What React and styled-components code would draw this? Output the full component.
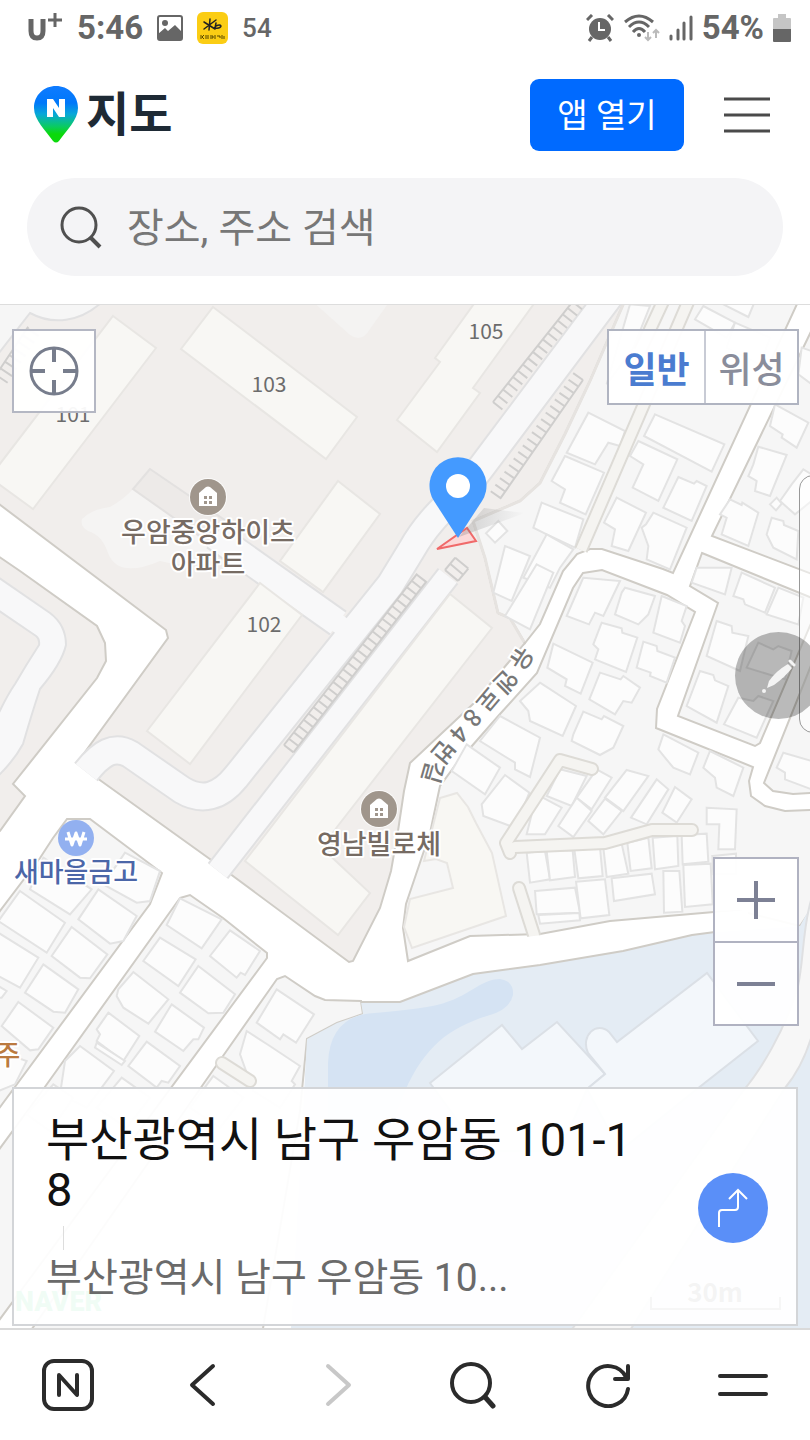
import React from "react";
import styled, { createGlobalStyle } from "styled-components";

const GlobalStyle = createGlobalStyle`
  *, *::before, *::after { box-sizing: border-box; }
  body {
    margin: 0;
    background: #fff;
    font-family: Roboto, "Noto Sans CJK KR", sans-serif;
  }
  button {
    border: 0;
    padding: 0;
    background: none;
    font: inherit;
    color: inherit;
    cursor: pointer;
  }
  svg { display: block; flex: none; }
`;

const Page = styled.div`
  display: flex;
  flex-direction: column;
  min-height: 100vh;
  overflow: hidden;
`;

/* ---------- status bar ---------- */

const StatusBar = styled.div`
  display: flex;
  justify-content: space-between;
  align-items: center;
  height: 56px;
  padding: 0 19px 0 28px;
  color: #666;
`;

const StatusGroup = styled.div`
  display: flex;
  align-items: center;
  gap: ${(p) => p.$gap}px;
`;

const StatusText = styled.span`
  font-size: ${(p) => (p.$small ? 26 : 33)}px;
  font-weight: ${(p) => (p.$small ? 500 : 700)};
  line-height: 40px;
`;

/* ---------- header ---------- */

const Header = styled.header`
  padding: 23px 27px 28px;
  border-bottom: 1px solid #ddd;
`;

const TitleRow = styled.div`
  display: flex;
  align-items: center;
  height: 72px;
  margin-bottom: 27px;
  padding: 0 13px 0 7px;
`;

const Logo = styled.a`
  display: flex;
  align-items: center;
  gap: 8px;
  margin-right: auto;
  color: #1e2a35;
  font-size: 47px;
  font-weight: 700;
  line-height: 64px;
  text-decoration: none;
`;

const OpenAppButton = styled.button`
  width: 154px;
  height: 72px;
  margin-right: 40px;
  padding-bottom: 4px;
  border-radius: 9px;
  background: #006aff;
  color: #fff;
  font-size: 33px;
  font-weight: 400;
`;

const SearchBox = styled.label`
  display: flex;
  align-items: center;
  gap: 24px;
  height: 98px;
  padding: 0 32px;
  border-radius: 49px;
  background: #f4f4f6;
`;

const SearchInput = styled.input`
  flex: 1;
  min-width: 0;
  height: 64px;
  padding: 2px 0 0;
  border: 0;
  outline: 0;
  background: none;
  font: inherit;
  font-size: 40px;
  &::placeholder { color: #777; opacity: 1; }
`;

/* ---------- map ---------- */

const MapArea = styled.main`
  position: relative;
  flex: 1;
  min-height: 720px;
  overflow: hidden;
`;

const MapCanvas = styled.svg`
  position: absolute;
  inset: 0;
  width: 100%;
  height: 100%;
  font-family: "Noto Sans CJK KR", sans-serif;
`;

const LocateButton = styled.button`
  position: absolute;
  top: 24px;
  left: 12px;
  display: grid;
  place-items: center;
  width: 84px;
  height: 84px;
  border: 2px solid #b4b7c3;
  background: rgba(255, 255, 255, 0.95);
`;

const MapTypes = styled.div`
  position: absolute;
  top: 24px;
  right: 11px;
  display: flex;
  height: 76px;
  border: 2px solid #b0b4c1;
  background: rgba(255, 255, 255, 0.95);
`;

const MapType = styled.button`
  width: ${(p) => (p.$active ? 95 : 93)}px;
  color: ${(p) => (p.$active ? "#4a7cd0" : "#8a8d9b")};
  font-size: 36px;
  font-weight: ${(p) => (p.$active ? 700 : 500)};
  & + & { border-left: 2px solid #c8cbd5; }
`;

const ZoomControls = styled.div`
  position: absolute;
  right: 11px;
  bottom: 302px;
  width: 86px;
  border: 2px solid #b0b2c1;
  background: rgba(255, 255, 255, 0.95);
`;

const ZoomButton = styled.button`
  display: grid;
  place-items: center;
  width: 100%;
  height: 82px;
  & + & { height: 83px; border-top: 2px solid #b0b2c1; }
`;

const EdgeHandle = styled.div`
  position: absolute;
  top: 170px;
  right: -20px;
  width: 31px;
  height: 258px;
  border: 1px solid #999;
  border-radius: 14px;
  background: rgba(255, 255, 255, 0.5);
`;

const PenButton = styled.button`
  position: absolute;
  top: 327px;
  right: -12px;
  display: grid;
  place-items: center;
  width: 87px;
  height: 87px;
  border-radius: 50%;
  background: rgba(0, 0, 0, 0.27);
`;

const PlaceCard = styled.section`
  position: absolute;
  left: 12px;
  right: 12px;
  bottom: 2px;
  display: flex;
  align-items: center;
  justify-content: space-between;
  gap: 44px;
  min-height: 238px;
  padding: 20px 28px 18px 32px;
  border: 2px solid #d3d5d8;
  background: rgba(255, 255, 255, 0.94);
`;

const PlaceInfo = styled.div`
  min-width: 0;
  max-width: 600px;
  padding-top: 6px;
`;

const PlaceName = styled.h1`
  margin: 0;
  color: #111;
  font-size: 47px;
  font-weight: 400;
  line-height: 50px;
  word-break: break-all;
`;

const Tick = styled.div`
  width: 1px;
  height: 24px;
  margin: 11px 0 0 17px;
  background: #ddd;
`;

const PlaceAddress = styled.p`
  margin: 0;
  color: #6a6a6a;
  font-size: 39px;
  font-weight: 400;
  line-height: 56px;
`;

const RouteButton = styled.button`
  display: grid;
  flex: none;
  place-items: center;
  width: 70px;
  height: 70px;
  border-radius: 50%;
  background: #5a8ff8;
`;

/* ---------- browser toolbar ---------- */

const Toolbar = styled.nav`
  display: flex;
  height: 112px;
  border-top: 2px solid #dadada;
  background: #fff;
`;

const ToolButton = styled.button`
  display: grid;
  flex: 1;
  place-items: center;
  color: ${(p) => (p.$dim ? "#c8c8c8" : "#2b2b2b")};
`;

/* ---------- map drawing ---------- */

const ROAD_EDGE = "#cfccc6";

const estate = [
  "-5,290 629,290 590,380 565,433 540,482 520,500 473,520 485,557 498,612 510,617 525,642 473,703 410,762 404,790 398,830 391,870 380,907 353,960 349,961 214,861 97,777 77,762 168,637 166,629 -5,500",
  "-5,553 20,570 97,625 105,642 106,660 97,677 13,783 25,795 0,830 -5,832",
];

const townBlock =
  "629,290 803,290 673,572 663,568 602,548 590,548 577,553 563,570 540,623 525,642 510,617 498,612 485,557 473,520 520,500 540,482 565,433 590,380";

const blocks = [
  "820,312 712,535 820,576",
  "702,552 812,597 812,620 760,742 755,745 678,715 718,602 690,585",
  "583,572 602,569 667,594 695,611 657,708 656,727 753,766 749,780 751,795 765,805 785,810 830,808 830,880 800,925 740,910 714,911 610,920 540,933 470,935 408,960 403,927 406,903 430,832 440,785 457,762 500,713 537,672 573,587",
  "812,662 764,782 773,790 793,793 812,792",
  "53,837 67,818 90,818 162,872 150,903 -90,1228 -90,1035 0,910 40,857",
  "180,897 190,894 223,917 267,952 267,957 -20,1345 -145,1345 42,1090",
  "270,988 277,978 285,975 315,995 325,999 361,1000 363,1013 337,1022 307,1038 300,1110 260,1345 20,1345 223,1055",
];

const estateBuildings = [
  "113,315 156,347 33,508 -4,481 -4,468",
  "213,306 357,416 326,458 181,348",
  "476,300 435,357 440,361 397,419 437,451 480,392 473,387 536,300",
  "338,480 380,513 323,591 280,560",
  "260,582 302,614 190,763 147,730",
  "450,593 492,627 337,826 322,847 370,892 338,934 245,860",
];

/* Houses are listed per map tile; tile data has three units to a pixel. */
const houseTiles = [
  { x: 540, y: 300, houses: [
    "145,335 255,390 240,435 205,425 165,490 80,455", "75,465 192,515 137,640 60,605 75,565 35,540",
    "5,605 130,655 105,740 20,700 -20,680", "345,340 553,430 515,512 312,405",
    "295,420 412,475 355,600 278,560 310,490 270,465", "415,528 462,548 470,540 500,555 455,660 370,620",
    "230,590 318,635 265,750 215,735 225,685 192,665", "340,635 440,680 390,805 320,775 325,735 305,680 318,670",
    "530,0 645,0 625,48", "490,15 585,65 560,110 465,55", "585,65 690,110 660,190 560,140",
    "705,310 805,365 770,440 725,410 728,400 690,375", "655,437 740,462 690,585 645,570 650,540 625,525 640,490",
    "790,505 815,520 815,600 765,640 720,600 755,550", "570,595 605,612 607,605 655,635 625,735 545,700 560,650 540,640",
    "695,650 730,660 732,672 775,690 770,775 700,740 680,700", "785,140 815,150 815,250 775,220",
    "690,610 710,590 725,608 708,628", "270,10 330,15 280,140 200,250", "20,700 100,745 60,800 30,860 -50,830",
  ] },
  { x: 540, y: 570, houses: [
    "130,20 240,30 190,135 165,125 147,160 80,135", "245,65 255,50 345,75 325,130 295,160 225,130",
    "365,75 440,105 425,150 435,165 420,215 340,185", "185,155 245,172 247,185 292,200 258,303 165,265 175,235 160,220",
    "40,218 158,275 122,368 75,345 80,325 22,290", "310,212 350,225 352,240 405,260 380,335 330,315 332,305 290,290",
    "180,305 242,325 250,315 300,350 275,395 250,390 225,430 148,385", "0,335 108,405 68,495 -30,450 -35,420 -60,390",
    "130,422 185,445 192,435 250,465 220,530 180,552 95,510 100,490", "470,-10 575,-10 555,70 455,35",
    "605,5 705,50 675,125 615,100 610,85 580,75", "715,50 790,80 775,160 680,130",
    "530,150 575,165 577,185 625,195 600,300 500,255", "480,300 520,312 525,328 565,345 530,455 440,405",
    "595,380 640,390 655,375 700,390 650,500 552,460", "655,215 700,235 715,225 755,240 735,325 620,290",
    "370,490 475,545 450,610 400,590 375,560 355,535", "510,540 610,590 580,675 530,650 525,620 490,590",
    "730,545 815,570 815,655 735,625 735,605 710,590", "60,595 140,615 95,705 20,675", "170,595 215,620 155,715 110,680",
    "260,597 325,615 250,720 195,680", "350,625 385,655 320,760 273,740", "405,648 455,685 410,755 367,725",
    "110,680 155,720 100,798 55,765", "195,683 245,720 190,790 145,750", "-10,670 65,710 15,790 -40,790",
    "500,710 590,715 585,835 535,835 538,760 500,760",
  ] },
  { x: 540, y: 820, houses: [
    "-40,95 15,90 30,175 -30,185", "20,90 98,88 105,168 30,178", "103,85 180,80 188,165 115,172",
    "190,80 245,68 265,158 200,168", "262,65 325,50 335,142 272,150", "338,50 412,45 415,135 345,145",
    "425,42 500,38 505,122 428,130", "215,172 335,158 345,220 222,240", "370,150 418,150 427,272 372,275",
    "430,132 512,128 518,250 435,258", "-15,210 105,200 120,275 -10,280", "-5,282 118,276 120,298 0,308",
    "108,182 195,175 208,282 122,292", "517,105 588,98 588,160 520,160",
  ] },
  { x: 270, y: 570, houses: [
    "690,435 810,500 780,618 735,595 735,575 630,510", "590,520 690,590 645,670 545,600",
    "705,612 778,665 735,770 640,735 635,700",
  ] },
  { x: 270, y: 300, houses: [
    "685,660 712,690 675,725 648,697", "705,735 780,765 725,900 670,875", "800,790 850,815 780,985 705,945",
  ] },
  { x: 0, y: 820, houses: [
    "375,95 480,150 450,240 410,245 310,190", "60,210 195,305 140,395 -5,300", "130,110 275,205 210,280 90,205",
    "295,205 410,285 370,360 330,368 235,295", "-5,335 115,410 60,500 -5,465", "215,318 322,400 270,472 240,470 155,405",
    "130,430 235,505 195,575 160,572 75,515", "-5,495 20,510 5,530 -5,530", "55,543 160,620 115,685 90,688 5,615",
    "540,232 665,295 605,382 500,312", "690,328 780,390 735,462 722,455 710,470 630,405", "480,350 587,415 535,495 430,420",
    "400,453 505,535 445,608 370,560 350,525 355,505", "595,435 705,520 670,575 625,577 540,515",
    "325,575 418,645 370,720 290,660 300,640 290,625", "515,550 612,620 595,655 580,655 550,690 465,632",
    "240,675 342,750 260,860 180,820 195,720", "440,662 540,735 505,785 485,780 470,800 385,735",
    "-5,690 80,720 45,790 -5,810", "365,770 450,830 380,920 290,860", "640,765 730,830 660,920 570,860",
    "290,665 375,720 365,732 285,680", "160,790 220,830 150,930 80,880",
  ] },
  { x: 270, y: 820, houses: [
    "20,505 132,580 78,665 40,640 30,655 -40,605", "-70,630 -5,672 90,735 65,780 75,790 30,860 -50,810 -90,700",
  ] },
];

function Ladder({ x1, y1, x2, y2, depth, closed }) {
  const length = Math.round(Math.hypot(x2 - x1, y2 - y1));
  const angle = (Math.atan2(y2 - y1, x2 - x1) * 180) / Math.PI;
  let d = `M0 0H${length}`;
  if (closed) d += `M0 ${depth}H${length}`;
  for (let i = 0; i <= length; i += 8) d += `M${i} 0V${depth}`;
  return (
    <path d={d} transform={`translate(${x1} ${y1}) rotate(${angle})`} fill="none" stroke="#cfcecd" strokeWidth="2" />
  );
}

function CasedRoad({ d, width, cap = "butt", fill = "#f8f8f9", edge = "#e1e1e2" }) {
  return (
    <g fill="none" strokeLinecap={cap} strokeLinejoin="round">
      <path d={d} stroke={edge} strokeWidth={width} />
      <path d={d} stroke={fill} strokeWidth={width - 4} />
    </g>
  );
}

function Lane({ d, cap = "round" }) {
  return <CasedRoad d={d} width={14} cap={cap} fill="#f5f4f1" edge="#dddbd6" />;
}

function HomeMarker({ x, y }) {
  return (
    <g transform={`translate(${x} ${y})`}>
      <circle r="19" fill="#fff" opacity=".8" />
      <circle r="18" fill="#a0968c" />
      <path d="M-9 9V-4L-2-10q2-1 4 0L9-4V9z" fill="#fff" />
      <path d="M-4-1h3v3h-3zM1-1h3v3H1zM-4 4h3v3h-3zM1 4h3v3H1z" fill="#a0968c" />
    </g>
  );
}

function Label({ x, y, color = "#766b63", children }) {
  return (
    <text x={x} y={y} textAnchor="middle" fontSize="27" fontWeight="500" fill={color}
      stroke="#fff" strokeWidth="4" strokeLinejoin="round" paintOrder="stroke">
      {children}
    </text>
  );
}

function BuildingNumber({ x, y, children }) {
  return <text x={x} y={y} textAnchor="middle" fontSize="21" fill="#6c6c6c">{children}</text>;
}

function MapDrawing() {
  return (
    <MapCanvas viewBox="0 304 810 1024" preserveAspectRatio="xMidYMin slice" role="img" aria-label="우암동 지도">
      <defs>
        <linearGradient id="pinShadow" x1="0" y1="0" x2="1" y2="0">
          <stop offset="0" stopColor="#777" stopOpacity=".6" />
          <stop offset="1" stopColor="#777" stopOpacity="0" />
        </linearGradient>
        <path id="roadName" d="M521 643L503 671L482 692L449 731L432 751Q421 768 418 812" />
      </defs>
      <rect x="-10" y="290" width="830" height="1060" fill="#fff" />

      <g fill="#f1eeec" stroke={ROAD_EDGE} strokeWidth="2">
        {estate.map((p) => <polygon key={p} points={p} />)}
      </g>

      {/* estate grounds */}
      <path d="M-5 300H103C80 322 52 324 30 312L-5 357z" fill="#f6f6f6" stroke="#e1e1e2" strokeWidth="2" />
      <path d="M312 300L350 334Q362 342 370 328L390 300z" fill="#f4f3f2" />
      <path d="M82 518Q92 508 110 506Q124 498 133 488L190 528L214 552Q200 570 160 560Q118 578 108 552Q102 534 88 530Q80 526 82 518z" fill="#f5f4f3" />
      <polygon points="150,468 133,488 215,546 232,524" fill="#edeae8" stroke="#e3e1e0" strokeWidth="2" />
      <CasedRoad d="M215 535L338 622" width={30} />
      <CasedRoad d="M612 292L480 468C460 495 432 512 412 548L390 584L236 776C220 796 202 801 182 789L130 753C114 744 101 752 86 771" width={30} />
      <path d="M330 605L352 621L338 634L322 622z" fill="#f8f8f9" />
      <CasedRoad d="M218 870L448 575" width={26} />
      <path d="M-5 574L50 612Q66 624 66 644Q62 662 40 688Q32 712 23 743Q14 760 -5 778V720Q6 696 15 683Q26 664 39 644Q40 638 36 635L-5 607z" fill="#f8f8f9" stroke="#e1e1e2" strokeWidth="2" />
      <g fill="#f8f7f4" stroke="#e8e6e3" strokeWidth="2">
        {estateBuildings.map((p) => <polygon key={p} points={p} />)}
      </g>
      <Ladder x1={284} y1={744} x2={417} y2={573} depth={12} closed />
      <Ladder x1={493} y1={401} x2={574} y2={299} depth={12} />
      <Ladder x1={583} y1={379} x2={500} y2={498} depth={12} />
      <Ladder x1={445} y1={569} x2={455} y2={557} depth={17} closed />
      <Ladder x1={-4} y1={374} x2={28} y2={326} depth={14} />

      {/* town blocks */}
      <polygon points={townBlock} fill="#f6f6f6" stroke={ROAD_EDGE} strokeWidth="2" />
      <path d="M629 290L590 380L565 433L540 482L520 500L473 520L485 557L498 612L510 617L524 641" fill="none" stroke="#e6e3e0" strokeWidth="3" />
      <g fill="#f6f6f6" stroke={ROAD_EDGE} strokeWidth="2">
        {blocks.map((p) => <polygon key={p} points={p} />)}
      </g>

      {/* water side */}
      <path d="M361 1001L400 1001L473 973L540 964L623 950L692 934L715 931L800 925L830 870V1345H290L307 1038L337 1022L363 1013z" fill="#e4ecf4" />
      <path d="M361 1001L400 1001L473 973L540 964L623 950L692 934L715 931" fill="none" stroke={ROAD_EDGE} strokeWidth="2" />
      <path d="M328 1100V1062Q330 1014 375 1012Q420 1008 437 1004C470 996 480 978 500 978Q514 980 513 994Q510 1008 490 1014C450 1026 425 1045 405 1090L380 1150H328z" fill="#d5e3f3" />
      <path d="M430 1082L502 1024L522 1048L557 1021L605 1073L587 1088L560 1150H480z" fill="#f3f7fb" stroke="#dbe0e6" strokeWidth="2" />
      <path d="M605 1073L588 1052C580 1034 597 1020 609 1031L617 1041L707 972L758 1040L697 1088L620 1150L587 1088z" fill="#f3f7fb" stroke="#dbe0e6" strokeWidth="2" />
      <path d="M830 860C800 900 806 950 798 985C785 1030 760 1070 743 1090L560 1345H620L785 1087Q803 1065 812 1034z" fill="#f7f7f7" stroke="#dfe0e2" strokeWidth="2" />
      <path d="M714 912L748 909V927L714 931z" fill="#fff" />

      {/* houses and lanes */}
      <path d="M440 797L457 792L468 806L476 822L492 852L506 915L412 947L404 926L410 898L453 887L447 862L436 858L424 860z" fill="#f8f7f3" stroke="#e8e6e3" strokeWidth="2" />
      {houseTiles.map((t) => (
        <g key={`${t.x}-${t.y}`} transform={`translate(${t.x} ${t.y}) scale(${1 / 3})`} fill="#fcfcfc" stroke="#e3e3e3" strokeWidth="6">
          {t.houses.map((p) => <polygon key={p} points={p} />)}
        </g>
      ))}
      <Lane d="M692 292L644 403L581 549" cap="butt" />
      <Lane d="M667 292L640 350" cap="butt" />
      <Lane d="M692 829H652L605 842L515 846M592 768L560 759L506 842L510 852" />
      <Lane d="M519 887L534 934" />
      <Lane d="M222 1062L250 1080" />
      <path d="M526 936L542 934V944L526 945z" fill="#fff" />

      {/* selected lot and pin */}
      <polygon points="437,548 467,527 476,540" fill="#fbd9d9" stroke="#f06a6a" strokeWidth="2" />
      <path d="M459 536L484 507L525 512Z" fill="url(#pinShadow)" opacity=".5" />
      <path d="M458 537L434 500A28.5 28.5 0 1 1 482 500z" fill="#449aff" />
      <circle cx="458" cy="485" r="12" fill="#fff" />

      {/* places */}
      <HomeMarker x={208} y={496} />
      <Label x={208} y={541}>
        우암중앙하이츠
        <tspan x={208} dy={32}>아파트</tspan>
      </Label>
      <HomeMarker x={379} y={808} />
      <Label x={379} y={853}>영남빌로체</Label>
      <circle cx="76" cy="837" r="18" fill="#92b0f0" />
      <path d="M68 831L72 844L76 832L80 844L84 831M65 838H87" fill="none" stroke="#fff" strokeWidth="3" strokeLinejoin="round" />
      <Label x={76} y={881} color="#4b66a8">새마을금고</Label>
      <Label x={8} y={1064} color="#bb7a40">주</Label>
      <BuildingNumber x={73} y={421}>101</BuildingNumber>
      <BuildingNumber x={269} y={391}>103</BuildingNumber>
      <BuildingNumber x={486} y={338}>105</BuildingNumber>
      <BuildingNumber x={264} y={631}>102</BuildingNumber>
      <text dx="1 4 4 6 7 6 5" fontSize="24" fontWeight="500" fill="#777" stroke="#fff" strokeWidth="4" paintOrder="stroke">
        <textPath href="#roadName">유엔로84번길</textPath>
      </text>
      <text x="15" y="1310" fontFamily="Roboto, sans-serif" fontSize="27" fontWeight="900" fill="#03c75a">NAVER</text>
      <text x="715" y="1301" textAnchor="middle" fontSize="26" fontWeight="700" fill="#444">30m</text>
      <path d="M651 1296V1308H780V1296" fill="none" stroke="#666" strokeWidth="2" />
    </MapCanvas>
  );
}

/* ---------- icons ---------- */

const CarrierIcon = () => (
  <svg width="35" height="32" viewBox="0 0 35 32" fill="none" stroke="#666" strokeWidth="5">
    <path d="M3 7V19Q3 26 9 26T15 19V7" />
    <path d="M27 1V15M20 8H34" strokeWidth="3" />
  </svg>
);

const PictureIcon = () => (
  <svg width="26" height="26" viewBox="0 0 26 26">
    <rect x="1" y="1" width="24" height="24" rx="2" fill="none" stroke="#666" strokeWidth="2" />
    <circle cx="8" cy="8" r="3" fill="#666" />
    <path d="M1 19L8 13L11 16L18 10L25 17V25H1z" fill="#666" />
  </svg>
);

const BankIcon = () => (
  <svg width="31" height="32" viewBox="0 0 31 32">
    <rect width="31" height="32" rx="6" fill="#fbcd14" />
    <path d="M13 7L12 18M7 10L18 17M7 17L19 8M19 11L18 16Q23 17 24 14Q23 12 19 14" fill="none" stroke="#222" strokeWidth="1.5" strokeLinecap="round" />
    <path d="M4 23V27M7 23L5 25L7 27M9 23V27M11 23V27M13 24H16V26H13M18 23V27M20 24H23V26M25 23V27M27 24V27" fill="none" stroke="#554600" strokeWidth="1" />
  </svg>
);

const AlarmIcon = () => (
  <svg width="28" height="28" viewBox="0 0 28 28" fill="none" stroke="#666" strokeWidth="3">
    <circle cx="14" cy="15" r="11" fill="#666" stroke="none" />
    <path d="M1 6L6 1M27 6L22 1M6 23L3 27M22 23L25 27" />
    <path d="M13 8V16H19" stroke="#fff" strokeWidth="2" />
  </svg>
);

const WifiIcon = () => (
  <svg width="37" height="28" viewBox="0 0 37 28" fill="none" stroke="#666" strokeWidth="3">
    <path d="M2 8Q16-4 30 8M6 13Q16 3 26 13M10 18Q16 11 22 18" />
    <circle cx="16" cy="21" r="2" fill="#666" stroke="none" />
    <path d="M25 18V26M22 23L25 26L28 23M33 24V16M30 19L33 16L36 19" stroke="#bbb" strokeWidth="2" />
  </svg>
);

const SignalIcon = () => (
  <svg width="24" height="26" viewBox="0 0 24 26" stroke="#666" strokeWidth="3" strokeLinecap="round">
    <path d="M2 21V24M9 15V24M15 8V24M22 2V24" />
  </svg>
);

const BatteryIcon = () => (
  <svg width="18" height="28" viewBox="0 0 18 28">
    <path d="M5 0H13V4H17Q18 4 18 5V15H0V5Q0 4 1 4H5z" fill="#c5c5c5" />
    <path d="M0 15H18V27Q18 28 17 28H1Q0 28 0 27z" fill="#666" />
  </svg>
);

const LogoPin = () => (
  <svg width="44" height="58" viewBox="0 0 44 58">
    <defs>
      <linearGradient id="logoFill" x1="0" y1="0" x2="0" y2="1">
        <stop offset="0" stopColor="#0f7bff" />
        <stop offset=".3" stopColor="#0078fa" />
        <stop offset=".5" stopColor="#08a8d8" />
        <stop offset=".72" stopColor="#0acb60" />
        <stop offset=".85" stopColor="#0bd90b" />
      </linearGradient>
    </defs>
    <path d="M22 0C34 0 44 9 44 22C44 34 32 45 25 55Q22 58 19 55C12 45 0 34 0 22C0 9 10 0 22 0z" fill="url(#logoFill)" />
    <path d="M13 13H19L25 22V13H31V31H25L19 22V31H13z" fill="#fff" />
  </svg>
);

const stroke = (width) => ({ fill: "none", stroke: "currentColor", strokeWidth: width, strokeLinecap: "round", strokeLinejoin: "round" });

export default function App() {
  return (
    <Page>
      <GlobalStyle />
      <StatusBar>
        <StatusGroup $gap={14}>
          <CarrierIcon />
          <StatusText>5:46</StatusText>
          <PictureIcon />
          <BankIcon />
          <StatusText $small>54</StatusText>
        </StatusGroup>
        <StatusGroup $gap={9}>
          <AlarmIcon />
          <WifiIcon />
          <SignalIcon />
          <StatusText>54%</StatusText>
          <BatteryIcon />
        </StatusGroup>
      </StatusBar>

      <Header>
        <TitleRow>
          <Logo href="#"><LogoPin />지도</Logo>
          <OpenAppButton type="button">앱 열기</OpenAppButton>
          <button type="button" aria-label="메뉴">
            <svg width="46" height="38" viewBox="0 0 46 38" stroke="#4a4a4a" strokeWidth="3">
              <path d="M0 3H46M0 19H46M0 35H46" />
            </svg>
          </button>
        </TitleRow>
        <SearchBox>
          <svg width="44" height="44" viewBox="0 0 44 44" fill="none" stroke="#505050" strokeWidth="3">
            <circle cx="20" cy="20" r="17" />
            <path d="M31 32L41 42" strokeWidth="4" />
          </svg>
          <SearchInput type="search" aria-label="장소, 주소 검색" placeholder="장소, 주소 검색" />
        </SearchBox>
      </Header>

      <MapArea>
        <MapDrawing />
        <LocateButton type="button" aria-label="내 위치">
          <svg width="50" height="50" viewBox="0 0 50 50" fill="none" stroke="#777d8c" strokeWidth="3">
            <circle cx="25" cy="25" r="23" />
            <path d="M25 2V16M25 34V48M2 25H16M34 25H48" strokeWidth="4" />
          </svg>
        </LocateButton>
        <MapTypes>
          <MapType type="button" $active aria-pressed="true">일반</MapType>
          <MapType type="button" aria-pressed="false">위성</MapType>
        </MapTypes>
        <EdgeHandle />
        <PenButton type="button" aria-label="펜">
          <svg width="34" height="34" viewBox="0 0 34 34" fill="#f4f4f4">
            <path d="M26 5L30 9Q23 18 12 26L5 29L7 22Q14 12 26 5z" />
            <circle cx="2" cy="32" r="2" />
            <path d="M28 2L32 6" stroke="#f4f4f4" strokeWidth="3" strokeLinecap="round" />
          </svg>
        </PenButton>
        <ZoomControls>
          <ZoomButton type="button" aria-label="확대">
            <svg width="38" height="38" viewBox="0 0 38 38" stroke="#7d8195" strokeWidth="4"><path d="M0 19H38M19 0V38" /></svg>
          </ZoomButton>
          <ZoomButton type="button" aria-label="축소">
            <svg width="38" height="38" viewBox="0 0 38 38" stroke="#7d8195" strokeWidth="4"><path d="M0 19H38" /></svg>
          </ZoomButton>
        </ZoomControls>
        <PlaceCard>
          <PlaceInfo>
            <PlaceName>부산광역시 남구 우암동 101-18</PlaceName>
            <Tick />
            <PlaceAddress>부산광역시 남구 우암동 10...</PlaceAddress>
          </PlaceInfo>
          <RouteButton type="button" aria-label="길찾기">
            <svg width="32" height="42" viewBox="0 0 32 42" fill="none" stroke="#fff" strokeWidth="2">
              <path d="M2 40V26Q2 23 5 23H18Q21 23 21 20V3M12 12L21 3L30 12" />
            </svg>
          </RouteButton>
        </PlaceCard>
      </MapArea>

      <Toolbar>
        <ToolButton type="button" aria-label="네이버 홈">
          <svg width="54" height="54" viewBox="0 0 54 54" {...stroke(4)}>
            <rect x="3" y="3" width="48" height="48" rx="10" />
            <path d="M18 37V17L36 37V17" />
          </svg>
        </ToolButton>
        <ToolButton type="button" aria-label="뒤로">
          <svg width="28" height="44" viewBox="0 0 28 44" {...stroke(4)}><path d="M24 3L3 22L24 41" /></svg>
        </ToolButton>
        <ToolButton type="button" $dim aria-label="앞으로">
          <svg width="28" height="44" viewBox="0 0 28 44" {...stroke(4)}><path d="M4 3L25 22L4 41" /></svg>
        </ToolButton>
        <ToolButton type="button" aria-label="검색">
          <svg width="46" height="48" viewBox="0 0 46 48" {...stroke(4)}>
            <circle cx="21" cy="22" r="19" />
            <path d="M35 36L43 45" strokeWidth="5" />
          </svg>
        </ToolButton>
        <ToolButton type="button" aria-label="새로고침">
          <svg width="46" height="46" viewBox="0 0 46 46" {...stroke(4)}>
            <path d="M43 27A20 20 0 1 1 41 15M43 4V17H30" />
          </svg>
        </ToolButton>
        <ToolButton type="button" aria-label="더보기">
          <svg width="50" height="24" viewBox="0 0 50 24" {...stroke(4)}><path d="M2 3H48M2 21H48" /></svg>
        </ToolButton>
      </Toolbar>
    </Page>
  );
}
